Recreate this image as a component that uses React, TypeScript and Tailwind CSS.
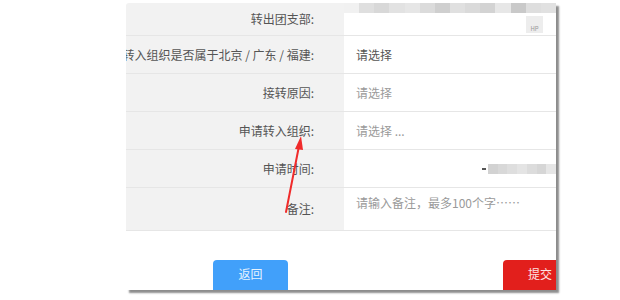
import React from 'react';

type Row = {
  label: string;
  value?: string;
  tone?: 'dark' | 'light';
  kind?: 'blurTop' | 'blurRight';
  tall?: boolean;
};

const rows: Row[] = [
  { label: '转出团支部:', kind: 'blurTop' },
  { label: '转入组织是否属于北京 / 广东 / 福建:', value: '请选择', tone: 'dark' },
  { label: '接转原因:', value: '请选择', tone: 'light' },
  { label: '申请转入组织:', value: '请选择 ...', tone: 'light' },
  { label: '申请时间:', kind: 'blurRight' },
  { label: '备注:', value: '请输入备注，最多100个字……', tone: 'light', tall: true },
];

// pixelated stand-in for the blurred values in the screenshot
const BlurStrip = ({ cells }: { cells: string[] }) => (
  <div className="flex h-full">
    {cells.map((c, i) => (
      <div key={i} className="flex-1" style={{ backgroundColor: c }} />
    ))}
  </div>
);

const App = () => {
  return (
    <div
      className="relative w-[620px] h-[300px] bg-white overflow-hidden"
      style={{ fontFamily: '"Noto Sans CJK SC", "Noto Sans", sans-serif' }}
    >
      <div className="ml-[126px] mt-[3px] w-[430px] h-[287px] overflow-hidden rounded-tl-[3px] bg-white shadow-[3px_3px_2px_rgba(0,0,0,0.45)]">
        {rows.map((row, i) => (
          <div
            key={i}
            className={`grid grid-cols-[218px_212px] border-b border-[#e6e6e6] ${
              i === 0 ? 'h-[33px]' : row.tall ? 'h-[43px]' : 'h-[38px]'
            }`}
          >
            <div className="flex items-center justify-end bg-[#f2f2f2] pr-[30px] text-[12px] text-[#555] whitespace-nowrap">
              {row.label}
            </div>
            <div className="relative">
              {row.kind === 'blurTop' && (
                <>
                  <div className="h-[13px] -mt-[3px] opacity-80">
                    <BlurStrip
                      cells={['#eee', '#d8d8d8', '#cfcfcf', '#dcdcdc', '#e0e0e0', '#d3d3d3', '#c4c4c4', '#d9d9d9', '#d2d2d2', '#c9c9c9', '#e2e2e2', '#bcbcbc', '#d6d6d6', '#dadada']}
                    />
                  </div>
                  <div className="absolute right-[13px] top-[13px] flex h-[17px] w-[17px] items-end justify-center bg-[#ededed] text-[6px] leading-[8px] text-[#999]">
                    HP
                  </div>
                </>
              )}
              {row.kind === 'blurRight' && (
                <div className="flex h-full items-center justify-end">
                  <div className="mr-[2px] h-[2px] w-[4px] bg-[#555]" />
                  <div className="h-[10px] w-[68px] opacity-80">
                    <BlurStrip cells={['#c8c8c8', '#cfcfcf', '#d6d6d6', '#dedede', '#d4d4d4', '#cdcdcd', '#e0e0e0']} />
                  </div>
                </div>
              )}
              {row.value && (
                <div
                  className={`flex h-full pl-[12px] text-[12px] ${
                    row.tall ? 'items-start pt-[6px]' : 'items-center'
                  } ${row.tone === 'dark' ? 'text-[#555]' : 'text-[#9a9a9a]'}`}
                >
                  {row.value}
                </div>
              )}
            </div>
          </div>
        ))}

        <div className="flex items-end justify-between pt-[29px] pl-[87px]">
          <button className="h-[32px] w-[75px] rounded-t-[4px] bg-[#41a0fa] pb-[4px] text-[12px] text-[#e8f3ff]">
            返回
          </button>
          <button className="h-[32px] w-[53px] rounded-tl-[4px] bg-[#e21f1c] pb-[4px] pl-[25px] text-left text-[12px] text-[#fde3e3]">
            提交
          </button>
        </div>
      </div>

      {/* annotation arrow */}
      <svg className="absolute left-0 top-0" width="620" height="300" viewBox="0 0 620 300">
        <line x1="286" y1="212" x2="299" y2="146" stroke="#f02b2b" strokeWidth="2" strokeLinecap="round" />
        <polygon points="301,136 295,149 303,150" fill="#f02b2b" />
      </svg>
    </div>
  );
};

export default App;
